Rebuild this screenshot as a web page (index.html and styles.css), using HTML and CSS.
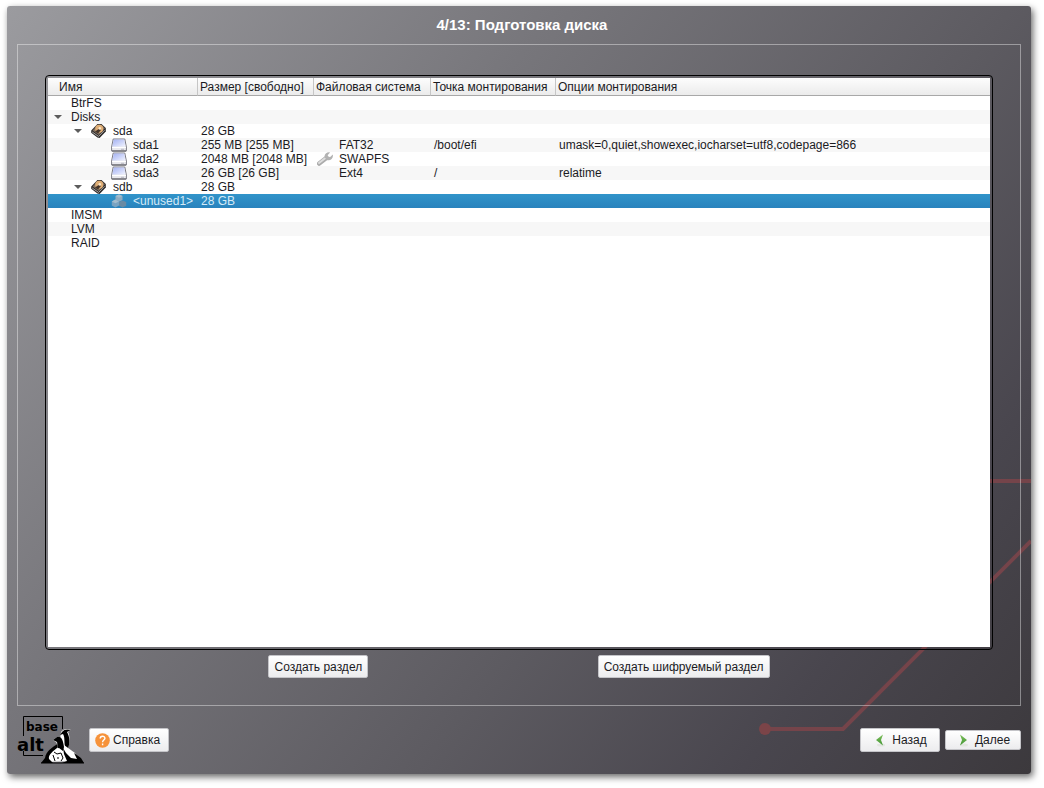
FILE: index.html
```
<!DOCTYPE html>
<html lang="ru">
<head>
    <meta charset="utf-8">
    <title>Подготовка диска</title>
    <link rel="stylesheet" href="styles.css">
</head>
<body>
    <!-- shared icons -->
    <svg class="defs" width="0" height="0">
        <defs>
            <linearGradient id="blue" x1="0" y1="0" x2="1" y2="1">
                <stop offset="0" stop-color="#a3b1f2"/>
                <stop offset="1" stop-color="#f2f4ff"/>
            </linearGradient>
            <linearGradient id="green" x1="0" y1="0" x2="0" y2="1">
                <stop offset="0" stop-color="#7fc05c"/>
                <stop offset="1" stop-color="#3f9430"/>
            </linearGradient>
        </defs>
        <symbol id="disk" viewBox="0 0 16 14">
            <path d="M0.2 6.5 L6.5 0 H10.5 L14.8 4 V7.5 L8.6 14 L6.4 13.6 L0.2 8.8 Z" fill="#2f2c2b"/>
            <path d="M1.6 6.6 L7 0.8 H10.2 L13.8 4.2 L7.8 11 Z" fill="#857261"/>
            <circle cx="8.2" cy="4.8" r="4" fill="#dfae76"/>
            <path d="M4 7.6 L8.4 4.6 L10 6 L7 9.4 Z" fill="#45352a"/>
            <circle cx="8.8" cy="4.4" r="1.3" fill="#fbe6c6"/>
            <path d="M1.2 8 L7.6 12.4 L13.6 6.2" stroke="#a5a2a0" fill="none"/>
        </symbol>
        <symbol id="part" viewBox="0 0 16 14">
            <path d="M2.2 1 H13.8 L15.4 9 V13 H0.6 V9 Z" fill="#e9e9ee" stroke="#7d7d86"/>
            <path d="M2.8 1.6 H13.2 L14.6 8.6 H1.4 Z" fill="url(#blue)"/>
            <path d="M1 9.5 H15" stroke="#fff"/>
            <path d="M1 13 H15" stroke="#5a5a60"/>
            <path d="M10 11.3 H13" stroke="#b9b9c2"/>
        </symbol>
        <symbol id="free" viewBox="0 0 16 14">
            <path d="M8 0.5 L11.5 2 V6 L8 7.8 L4.5 6 V2 Z" fill="#8fabc0"/>
            <path d="M4.2 5.5 L8 7.5 V11.5 L4.4 13.4 L0.8 11.5 V7.5 Z" fill="#7aa3c1"/>
            <path d="M11.6 6.5 L15.2 8 V11.8 L11.6 13.6 L8 11.8 V8 Z" fill="#6a8ba4"/>
            <path d="M0.8 7.5 L4.2 5.5 L8 7.5 L4.4 9.2 Z M4.5 2 L8 0.5 L11.5 2 L8 3.8 Z" fill="#a3bccd"/>
        </symbol>
        <symbol id="wrench" viewBox="0 0 16 14">
            <path d="M2.2 11.6 L9.6 5.8" stroke="#acacac" stroke-width="4.4" stroke-linecap="round"/>
            <path d="M2 11 L9.4 5.2" stroke="#dedede" stroke-width="2" stroke-linecap="round"/>
            <path d="M13 0.4 L10.6 3.2 L11.4 4.8 L13.2 5 L15.8 2.4 C16.6 6 13.8 9 10.4 8.2 L7.6 5.6 C7 2 10 -0.2 13 0.4 Z" fill="#b2b2b2"/>
        </symbol>
        <symbol id="arrow" viewBox="0 0 8 4">
            <path d="M0 0 H8 L4 4 Z" fill="#5c5c5c"/>
        </symbol>
    </svg>

    <div class="window">
        <svg class="traces" width="280" height="300" viewBox="0 0 280 300">
            <path d="M220 7 H280 M14 255 H92 L280 67"/>
            <circle cx="14" cy="255" r="6"/>
        </svg>

        <h1>4/13: Подготовка диска</h1>

        <main class="panel">
            <div class="frame">
                <div class="tree">
                    <table>
                        <colgroup>
                            <col class="c-name">
                            <col class="c-size">
                            <col class="c-fs">
                            <col class="c-mount">
                            <col>
                        </colgroup>
                        <thead>
                            <tr>
                                <th>Имя</th>
                                <th>Размер [свободно]</th>
                                <th>Файловая система</th>
                                <th>Точка монтирования</th>
                                <th>Опции монтирования</th>
                            </tr>
                        </thead>
                        <tbody>
                            <tr><td class="lvl0">BtrFS</td><td></td><td></td><td></td><td></td></tr>
                            <tr>
                                <td class="lvl0 open"><button class="twisty" aria-label="Свернуть"><svg><use href="#arrow"/></svg></button>Disks</td>
                                <td></td><td></td><td></td><td></td>
                            </tr>
                            <tr>
                                <td class="lvl1 open"><button class="twisty" aria-label="Свернуть"><svg><use href="#arrow"/></svg></button><svg class="icon"><use href="#disk"/></svg>sda</td>
                                <td>28 GB</td><td></td><td></td><td></td>
                            </tr>
                            <tr>
                                <td class="lvl2"><svg class="icon"><use href="#part"/></svg>sda1</td>
                                <td>255 MB [255 MB]</td>
                                <td class="fs">FAT32</td>
                                <td>/boot/efi</td>
                                <td>umask=0,quiet,showexec,iocharset=utf8,codepage=866</td>
                            </tr>
                            <tr>
                                <td class="lvl2"><svg class="icon"><use href="#part"/></svg>sda2</td>
                                <td>2048 MB [2048 MB]</td>
                                <td><svg class="icon"><use href="#wrench"/></svg>SWAPFS</td>
                                <td></td><td></td>
                            </tr>
                            <tr>
                                <td class="lvl2"><svg class="icon"><use href="#part"/></svg>sda3</td>
                                <td>26 GB [26 GB]</td>
                                <td class="fs">Ext4</td>
                                <td>/</td>
                                <td>relatime</td>
                            </tr>
                            <tr>
                                <td class="lvl1 open"><button class="twisty" aria-label="Свернуть"><svg><use href="#arrow"/></svg></button><svg class="icon"><use href="#disk"/></svg>sdb</td>
                                <td>28 GB</td><td></td><td></td><td></td>
                            </tr>
                            <tr class="selected">
                                <td class="lvl2"><svg class="icon"><use href="#free"/></svg>&lt;unused1&gt;</td>
                                <td>28 GB</td><td></td><td></td><td></td>
                            </tr>
                            <tr><td class="lvl0">IMSM</td><td></td><td></td><td></td><td></td></tr>
                            <tr><td class="lvl0">LVM</td><td></td><td></td><td></td><td></td></tr>
                            <tr><td class="lvl0">RAID</td><td></td><td></td><td></td><td></td></tr>
                        </tbody>
                    </table>
                </div>
            </div>
            <div class="actions">
                <button class="btn">Создать раздел</button>
                <button class="btn">Создать шифруемый раздел</button>
            </div>
        </main>

        <footer>
            <svg class="logo" width="67" height="50" viewBox="0 0 67 50">
                <path d="M6.5 21 V1.5 H45.5 V14 M6.5 36 V40.5 H26" fill="none" stroke="#000"/>
                <text x="9" y="16" font-size="12" class="logo-text">base</text>
                <text x="0" y="36" font-size="18" class="logo-text">alt</text>
                <!-- tall penguin behind -->
                <path d="M44 17 C46 14 51 13 54 15 L51 17 C53 21 53 27 51 34 L46 33 L43 25 Z" fill="#fff"/>
                <path d="M45 17 C47 14 51 14 54 15 L50 17 C53 22 53 28 51 34 L48 32 C47 26 48 22 46 19 L43 20 Z"/>
                <!-- two leaning ones -->
                <path d="M36 25 L40 22 C44 21 46 25 47 30 L58 38 L62 46 L28 47 L29 41 C31 35 38 34 40 28 Z" fill="#fff"/>
                <path d="M36 25 L40 22 C45 21 46 26 47 32 L46 36 L42 33 C39 34 41 30 40 27 Z"/>
                <path d="M40 29 C36 32 29 36 28 43 L24 48 H36 L32 44 C31 40 36 36 40 33 Z"/>
                <path d="M46 33 L47 39 L50 46 L45 48 H67 L64 43 L57 38 L60 44 L54 43 L49 38 Z"/>
                <!-- chick -->
                <path d="M37 37 L40 39 L44 38 L46 43 L44 46 M36 40 L38 46 M41 42 V44" fill="none" stroke="#000"/>
                <path d="M24 48 H67" stroke="#000"/>
            </svg>
            <button class="btn help">
                <svg width="15" height="15" viewBox="0 0 15 15">
                    <circle cx="7.5" cy="7.5" r="7.3" fill="#f6923a"/>
                    <path d="M5.2 5.6 C5.2 2.4 10 2.5 9.9 5.4 C9.8 7.1 7.6 7.1 7.6 9.2 M7.6 10.6 V12.2" fill="none" stroke="#fff" stroke-width="1.4"/>
                </svg>Справка
            </button>
            <button class="btn back">
                <svg width="16" height="16" viewBox="0 0 16 16">
                    <ellipse cx="8" cy="13" rx="4" ry="1.5" fill="#e2e6e0"/>
                    <path d="M10 2.5 L3 8 L10 13.5 L8 8 Z" fill="url(#green)"/>
                </svg>Назад
            </button>
            <button class="btn next">
                <svg width="16" height="16" viewBox="0 0 16 16">
                    <ellipse cx="8" cy="13" rx="4" ry="1.5" fill="#e2e6e0"/>
                    <path d="M4 2.5 L11 8 L4 13.5 L6 8 Z" fill="url(#green)"/>
                </svg>Далее
            </button>
        </footer>
    </div>
</body>
</html>
```

FILE: styles.css
```
* {
    box-sizing: border-box;
}

body {
    margin: 0;
    padding: 6px 13px 14px 7px;
    min-height: 100vh;
    display: flex;
    background: #fff;
    font-family: "Liberation Sans", Arial, sans-serif;
    font-size: 12px;
    color: #1b1b1f;
}

.defs {
    position: absolute;
}

.window {
    position: relative;
    flex: 1;
    display: flex;
    flex-direction: column;
    border-radius: 3px;
    background: linear-gradient(128deg, #9b9b9f 0%, #77767b 34%, #5d5b61 62%, #49464e 82%, #3c393d 100%);
    box-shadow: 2px 3px 7px rgba(0, 0, 0, 0.6);
}

/* circuit lines in the corner of the wallpaper */
.traces {
    position: absolute;
    right: 0;
    bottom: 0;
    fill: #7b4448;
}

.traces path {
    fill: none;
    stroke: #75444a;
    stroke-width: 4px;
}

h1 {
    margin: 0;
    padding-left: 6px;
    height: 38px;
    line-height: 38px;
    text-align: center;
    font-size: 15px;
    color: #fff;
}

.panel {
    position: relative;
    flex: 1;
    display: flex;
    flex-direction: column;
    margin: 0 10px;
    padding: 30px 27px 27px;
    border: 1px solid rgba(255, 255, 255, 0.4);
}

.frame {
    flex: 1;
    display: flex;
    padding: 2px;
    border: 1px solid #000;
    border-radius: 4px;
}

.tree {
    flex: 1;
    background: #fff;
}

table {
    width: 100%;
    table-layout: fixed;
    border-collapse: separate;
    border-spacing: 0;
}

.c-name { width: 150px; }
.c-size { width: 116px; }
.c-fs { width: 117px; }
.c-mount { width: 125px; }

th {
    height: 18px;
    padding: 2px 0 0 2px;
    line-height: 15px;
    text-align: left;
    font-weight: normal;
    white-space: nowrap;
    background: linear-gradient(#fdfdfd, #ebebeb);
    border-right: 1px solid #c6c6c6;
    border-bottom: 1px solid #a8a8a8;
}

th:first-child {
    padding-left: 11px;
}

th:last-child {
    border-right: none;
}

td {
    height: 14px;
    padding: 0 0 0 3px;
    line-height: 14px;
    white-space: nowrap;
}

tbody tr:nth-child(even) {
    background: #f7f7f7;
}

tbody tr.selected {
    background: linear-gradient(#3194ca, #2a83bd);
    color: #d5eaf7;
}

td.lvl0 { padding-left: 23px; }
td.lvl0.open { padding-left: 0; }
td.lvl1.open { padding-left: 20px; }
td.lvl2 { padding-left: 63px; }
td.fs { padding-left: 25px; }

.twisty {
    width: 20px;
    height: 14px;
    margin: 0 3px 0 0;
    padding: 0;
    border: none;
    background: none;
    vertical-align: top;
}

.twisty svg {
    display: block;
    width: 8px;
    height: 4px;
    margin: 0 auto;
}

.icon {
    width: 16px;
    height: 14px;
    margin-right: 6px;
    vertical-align: top;
}

.actions {
    display: flex;
    justify-content: space-evenly;
    gap: 6px;
    margin-top: 5px;
}

.btn {
    height: 23px;
    padding: 0 5px;
    border: 1px solid #c4c4c8;
    border-radius: 2px;
    background: linear-gradient(#fff, #ececee);
    font: inherit;
    color: inherit;
}

footer {
    position: relative;
    height: 68px;
    display: flex;
    align-items: center;
    gap: 5px;
    padding: 0 10px;
}

footer .btn {
    display: flex;
    align-items: center;
    justify-content: center;
    gap: 3px;
    width: 80px;
    height: 24px;
}

footer .help {
    justify-content: flex-start;
}

footer .back {
    margin-left: auto;
}

footer .next {
    width: 76px;
    height: 20px;
}

.logo-text {
    font-family: "DejaVu Sans", sans-serif;
    font-weight: bold;
}
```
